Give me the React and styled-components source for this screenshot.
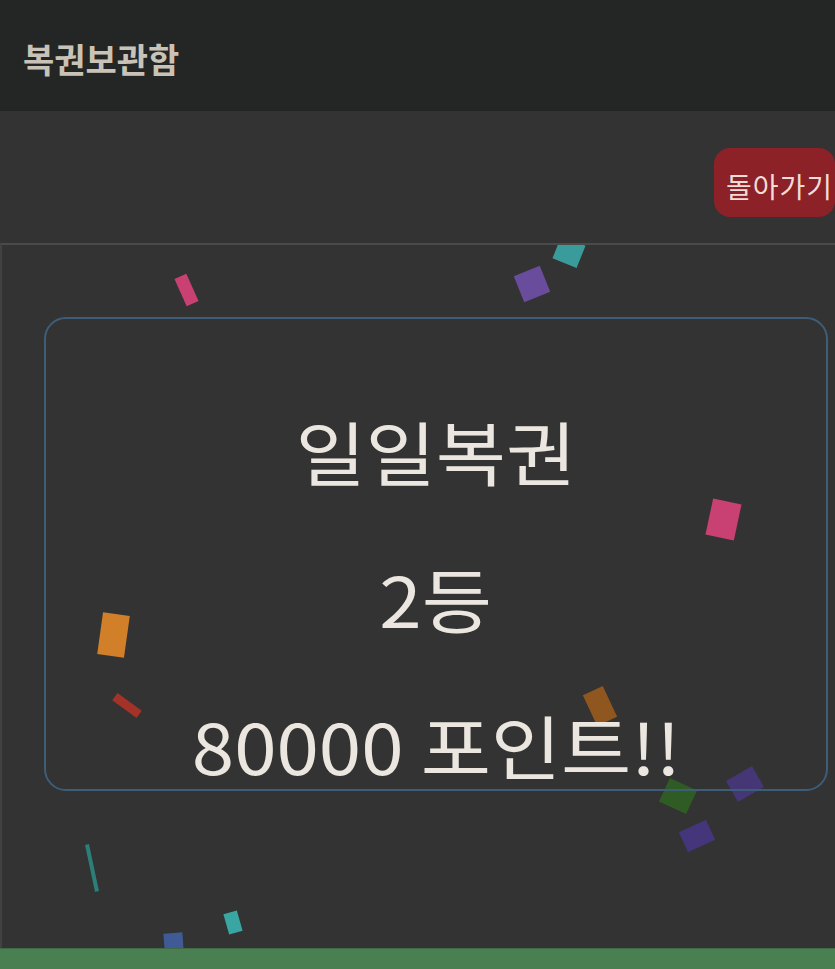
import React from "react";
import styled, { createGlobalStyle } from "styled-components";

const Global = createGlobalStyle`
  html, body { margin: 0; padding: 0; }
  body {
    background: #323332;
    font-family: "Noto Sans CJK KR", "Noto Sans", sans-serif;
    overflow: hidden;
  }
`;

const Page = styled.div`
  width: 835px;
  height: 969px;
  display: flex;
  flex-direction: column;
  overflow: hidden;
`;

const Header = styled.header`
  height: 111px;
  flex: none;
  background: #242525;
  display: flex;
  align-items: center;
  padding: 6px 0 0 23px;
  box-sizing: border-box;
`;

const Title = styled.h1`
  margin: 0;
  font-size: 34px;
  font-weight: 700;
  color: #c9c3b7;
  letter-spacing: 0px;
`;

const Toolbar = styled.div`
  height: 132px;
  flex: none;
  display: flex;
  justify-content: flex-end;
  align-items: flex-start;
  padding-top: 37px;
  box-sizing: border-box;
`;

const BackButton = styled.button`
  width: 121px;
  height: 69px;
  border: none;
  border-radius: 16px;
  background: #8c2127;
  color: #f1dcd8;
  font-family: inherit;
  font-size: 28px;
  line-height: 69px;
  padding: 4px 0 0 12px;
  box-sizing: border-box;
  text-align: left;
  white-space: nowrap;
  overflow: hidden;
  letter-spacing: 1px;
  cursor: pointer;
`;

const Stage = styled.section`
  position: relative;
  flex: none;
  height: 705px;
  border-top: 2px solid #494a49;
  border-left: 2px solid #414241;
  box-sizing: border-box;
  overflow: hidden;
  padding: 72px 0 0 42px;
`;

const Confetti = styled.div`
  position: absolute;
  left: ${(p) => p.$x - p.$w / 2 - 2}px;
  top: ${(p) => p.$y - p.$h / 2 - 245}px;
  width: ${(p) => p.$w}px;
  height: ${(p) => p.$h}px;
  background: ${(p) => p.$c};
  transform: rotate(${(p) => p.$r}deg);
  z-index: 0;
`;

const Card = styled.div`
  position: relative;
  z-index: 1;
  width: 784px;
  height: 474px;
  box-sizing: border-box;
  border: 2px solid #3e5d78;
  border-radius: 22px;
  padding-top: 58px;
  display: flex;
  flex-direction: column;
  align-items: center;
`;

const Line = styled.div`
  height: 147px;
  line-height: 147px;
  font-size: 70px;
  font-weight: 400;
  color: #ebe6df;
  white-space: nowrap;
  transform: scaleX(1.09);
`;

const Footer = styled.footer`
  flex: 1;
  background: #4a7f52;
  border-top: 1px solid #3f6a45;
`;

const pieces = [
  { x: 186, y: 290, w: 13, h: 30, r: -24, c: "#c94173" },
  { x: 569, y: 252, w: 26, h: 24, r: 22, c: "#3a9c9a" },
  { x: 532, y: 284, w: 28, h: 28, r: -22, c: "#6a4c9c" },
  { x: 723, y: 519, w: 29, h: 37, r: 12, c: "#c94173" },
  { x: 113, y: 635, w: 27, h: 42, r: 8, c: "#d27f2a" },
  { x: 127, y: 705, w: 30, h: 9, r: 36, c: "#a33228" },
  { x: 600, y: 706, w: 22, h: 34, r: -25, c: "#8f561f" },
  { x: 678, y: 796, w: 30, h: 26, r: 25, c: "#2f5c25" },
  { x: 745, y: 784, w: 30, h: 24, r: -30, c: "#453676" },
  { x: 697, y: 836, w: 30, h: 22, r: -25, c: "#45357a" },
  { x: 92, y: 868, w: 4, h: 48, r: -12, c: "#2c7f79" },
  { x: 233, y: 922, w: 14, h: 21, r: -16, c: "#3aa6a3" },
  { x: 173, y: 941, w: 19, h: 17, r: -4, c: "#3f5a94" },
];

export default function App() {
  return (
    <Page>
      <Global />
      <Header>
        <Title>복권보관함</Title>
      </Header>
      <Toolbar>
        <BackButton>돌아가기</BackButton>
      </Toolbar>
      <Stage>
        {pieces.map((p, i) => (
          <Confetti
            key={i}
            $x={p.x}
            $y={p.y}
            $w={p.w}
            $h={p.h}
            $r={p.r}
            $c={p.c}
          />
        ))}
        <Card>
          <Line>일일복권</Line>
          <Line>2등</Line>
          <Line>80000 포인트!!</Line>
        </Card>
      </Stage>
      <Footer />
    </Page>
  );
}
